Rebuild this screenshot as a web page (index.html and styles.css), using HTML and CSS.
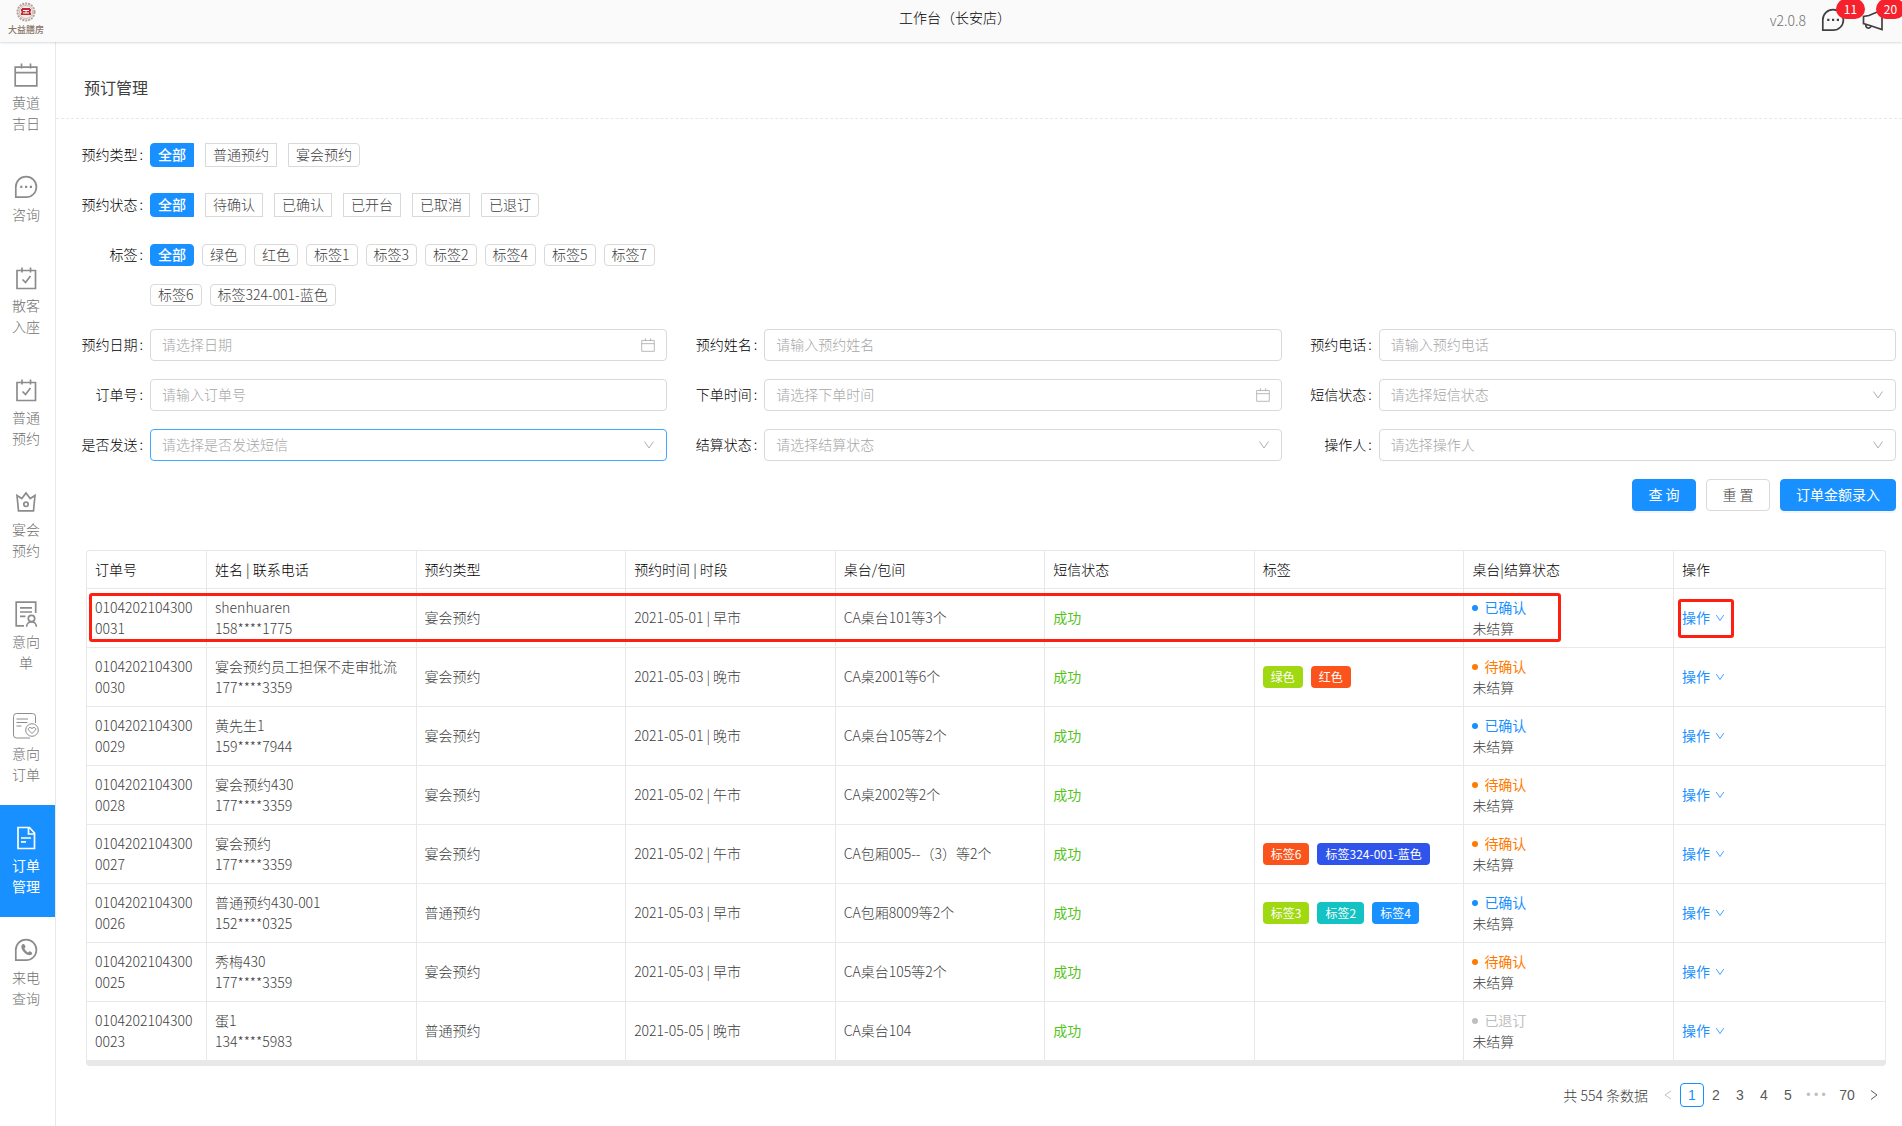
FILE: index.html
```html
<!DOCTYPE html>
<html lang="zh-CN">
<head>
    <meta charset="UTF-8">
    <meta name="viewport" content="width=device-width, initial-scale=1.0">
    <title>预订管理</title>
    <link rel="stylesheet" href="styles.css">
</head>
<body>
    <svg class="defs" width="0" height="0" aria-hidden="true">
        <symbol id="i-calendar" viewBox="0 0 24 24">
            <path d="M1.2 4.2h21.6v18.6H1.2zM1.2 9.7h21.6M7.5 .5v5M16.5 .5v5"/>
        </symbol>
        <symbol id="i-message" viewBox="0 0 24 24">
            <path d="M1.8 22.2V12A10.3 10.3 0 1 1 12 22.2z"/>
            <path class="fill" d="M6.2 10.8h2.2v2.2H6.2zM11 10.8h2.2v2.2H11zM15.8 10.8H18v2.2h-2.2z"/>
        </symbol>
        <symbol id="i-schedule" viewBox="0 0 24 24">
            <path d="M3 4.5h18.500v18H3zM8 1.500v5M16.500 1.500v5M8.500 13.500l3 3 5-6.500"/>
        </symbol>
        <symbol id="i-crown" viewBox="0 0 24 24">
            <path d="M3 5.500l4.800 3L12 3l4.200 5.500 4.800-3-1.500 15.300h-15z"/>
            <circle cx="12" cy="14.300" r="2.200"/>
        </symbol>
        <symbol id="i-solution" viewBox="0 0 24 26">
            <path d="M10 24.800H2.200V1.200h19.500V12M6 6.800h12M6 11h12M6 15.300h5.500"/>
            <circle cx="17.500" cy="17.500" r="3.200"/>
            <path d="M12.600 25.800c0-6.600 9.800-6.600 9.800 0"/>
        </symbol>
        <symbol id="i-intent" viewBox="0 0 26 26">
            <path d="M17 25H3.500a3 3 0 0 1-3-3V3.500a3 3 0 0 1 3-3h16a3 3 0 0 1 3 3V10M3.500 6h11.500M3.500 9.500h11M3.500 13h5"/>
            <circle cx="19" cy="17" r="6.300"/>
            <path d="M19 20.500l-3.300-3.300c-1.600-2 1.500-4 3.300-1.600 1.800-2.400 4.900-.4 3.300 1.600z"/>
        </symbol>
        <symbol id="i-file" viewBox="0 0 24 24">
            <path d="M4 1.500h11.500L20.500 7v15.500H4zM14.500 1.500V8h6M7 12h10M7 15.800h5"/>
        </symbol>
        <symbol id="i-phone" viewBox="0 0 24 24">
            <path d="M1.800 22.200V12A10.300 10.300 0 1 1 12 22.200z"/>
            <path class="fill" d="M8.500 6.200c-4 3.300 3.500 12.200 8.200 10.800 1.800-.8 2-2.200.6-3.100-1.700-1-2-.7-3.200.5-1.700-.8-3-2.200-3.700-3.900 1.200-1 1.300-1.700.5-3.300-.6-1-1.500-1.600-2.400-1z"/>
        </symbol>
        <symbol id="i-horn" viewBox="0 0 24 24">
            <path d="M21 2v19.500L9 17.500l-6.500-2V8.500L8 7.500zM5 16.500a2.600 2.600 0 1 0 5 1.200"/>
        </symbol>
        <symbol id="i-down" viewBox="0 0 12 12">
            <path d="M1.500 2.500L6 9l4.500-6.500"/>
        </symbol>
        <symbol id="i-left" viewBox="0 0 12 12">
            <path d="M9 2L3 6l6 4"/>
        </symbol>
        <symbol id="i-right" viewBox="0 0 12 12">
            <path d="M3 1.500L9 6l-6 4.500"/>
        </symbol>
    </svg>

    <header class="header">
        <a class="logo" href="#" aria-label="大益膳房">
            <svg width="20" height="20" viewBox="0 0 20 20">
                <circle cx="10" cy="10" r="8.500" fill="#f4efec" stroke="#b5a197" stroke-width="2" stroke-dasharray="2 1"/>
                <circle cx="10" cy="10" r="6.500" fill="none" stroke="#c9bab2" stroke-width="1"/>
                <path fill="#bf2a34" d="M6 6h8v1h1v2.500h-1v1h1V13H5v-2.500h1v-1H5V7h1z"/>
                <path stroke="#fff" fill="none" d="M7 8.500h6M7 11h6M10 8v3"/>
            </svg>
            <span>大益膳房</span>
        </a>
        <div class="header-title">工作台（长安店）</div>
        <div class="header-right">
            <span class="version">v2.0.8</span>
            <button class="notice" aria-label="消息">
                <svg class="icon"><use href="#i-message"/></svg>
                <span class="count">11</span>
            </button>
            <button class="notice" aria-label="公告">
                <svg class="icon"><use href="#i-horn"/></svg>
                <span class="count">20</span>
            </button>
        </div>
    </header>

    <div class="layout">
        <nav class="sidebar">
            <a href="#"><svg class="icon"><use href="#i-calendar"/></svg>黄道吉日</a>
            <a href="#"><svg class="icon"><use href="#i-message"/></svg>咨询</a>
            <a href="#"><svg class="icon"><use href="#i-schedule"/></svg>散客入座</a>
            <a href="#"><svg class="icon"><use href="#i-schedule"/></svg>普通预约</a>
            <a href="#"><svg class="icon"><use href="#i-crown"/></svg>宴会预约</a>
            <a href="#"><svg class="icon tall"><use href="#i-solution"/></svg>意向单</a>
            <a href="#"><svg class="icon tall thin"><use href="#i-intent"/></svg>意向订单</a>
            <a href="#" class="active"><svg class="icon"><use href="#i-file"/></svg>订单管理</a>
            <a href="#"><svg class="icon"><use href="#i-phone"/></svg>来电查询</a>
        </nav>

        <main class="main">
            <h1 class="page-title">预订管理</h1>

            <form class="filters">
                <div class="field">
                    <span class="label">预约类型</span>
                    <div class="radios">
                        <button type="button" class="on">全部</button>
                        <button type="button">普通预约</button>
                        <button type="button">宴会预约</button>
                    </div>
                </div>
                <div class="field">
                    <span class="label">预约状态</span>
                    <div class="radios">
                        <button type="button" class="on">全部</button>
                        <button type="button">待确认</button>
                        <button type="button">已确认</button>
                        <button type="button">已开台</button>
                        <button type="button">已取消</button>
                        <button type="button">已退订</button>
                    </div>
                </div>
                <div class="field">
                    <span class="label">标签</span>
                    <div class="checks">
                        <button type="button" class="on">全部</button>
                        <button type="button">绿色</button>
                        <button type="button">红色</button>
                        <button type="button">标签1</button>
                        <button type="button">标签3</button>
                        <button type="button">标签2</button>
                        <button type="button">标签4</button>
                        <button type="button">标签5</button>
                        <button type="button">标签7</button>
                        <button type="button">标签6</button>
                        <button type="button">标签324-001-蓝色</button>
                    </div>
                </div>

                <div class="grid">
                    <div class="field">
                        <label class="label" for="date">预约日期</label>
                        <div class="control">
                            <input type="text" id="date" placeholder="请选择日期">
                            <svg class="suffix"><use href="#i-calendar"/></svg>
                        </div>
                    </div>
                    <div class="field">
                        <label class="label" for="name">预约姓名</label>
                        <div class="control"><input type="text" id="name" placeholder="请输入预约姓名"></div>
                    </div>
                    <div class="field">
                        <label class="label" for="phone">预约电话</label>
                        <div class="control"><input type="text" id="phone" placeholder="请输入预约电话"></div>
                    </div>
                    <div class="field">
                        <label class="label" for="order">订单号</label>
                        <div class="control"><input type="text" id="order" placeholder="请输入订单号"></div>
                    </div>
                    <div class="field">
                        <label class="label" for="time">下单时间</label>
                        <div class="control">
                            <input type="text" id="time" placeholder="请选择下单时间">
                            <svg class="suffix"><use href="#i-calendar"/></svg>
                        </div>
                    </div>
                    <div class="field">
                        <label class="label" for="sms">短信状态</label>
                        <div class="control">
                            <select id="sms"><option>请选择短信状态</option></select>
                            <svg class="suffix arrow"><use href="#i-down"/></svg>
                        </div>
                    </div>
                    <div class="field">
                        <label class="label" for="send">是否发送</label>
                        <div class="control">
                            <select id="send" class="hover"><option>请选择是否发送短信</option></select>
                            <svg class="suffix arrow"><use href="#i-down"/></svg>
                        </div>
                    </div>
                    <div class="field">
                        <label class="label" for="settle">结算状态</label>
                        <div class="control">
                            <select id="settle"><option>请选择结算状态</option></select>
                            <svg class="suffix arrow"><use href="#i-down"/></svg>
                        </div>
                    </div>
                    <div class="field">
                        <label class="label" for="operator">操作人</label>
                        <div class="control">
                            <select id="operator"><option>请选择操作人</option></select>
                            <svg class="suffix arrow"><use href="#i-down"/></svg>
                        </div>
                    </div>
                </div>

                <div class="actions">
                    <button type="button" class="btn primary">查 询</button>
                    <button type="button" class="btn">重 置</button>
                    <button type="button" class="btn primary">订单金额录入</button>
                </div>
            </form>

            <div class="table-wrap">
                <table>
                    <thead>
                        <tr>
                            <th class="col-no">订单号</th>
                            <th>姓名 | 联系电话</th>
                            <th>预约类型</th>
                            <th>预约时间 | 时段</th>
                            <th>桌台/包间</th>
                            <th>短信状态</th>
                            <th>标签</th>
                            <th>桌台|结算状态</th>
                            <th class="col-op">操作</th>
                        </tr>
                    </thead>
                    <tbody>
                        <tr>
                            <td>01042021043000031</td>
                            <td>shenhuaren<br>158****1775</td>
                            <td>宴会预约</td>
                            <td>2021-05-01 | 早市</td>
                            <td>CA桌台101等3个</td>
                            <td class="success">成功</td>
                            <td></td>
                            <td><span class="status blue">已确认</span>未结算</td>
                            <td><a href="#" class="op marked">操作<svg><use href="#i-down"/></svg></a></td>
                        </tr>
                        <tr>
                            <td>01042021043000030</td>
                            <td>宴会预约员工担保不走审批流<br>177****3359</td>
                            <td>宴会预约</td>
                            <td>2021-05-03 | 晚市</td>
                            <td>CA桌2001等6个</td>
                            <td class="success">成功</td>
                            <td><div class="tags"><span class="tag lime">绿色</span><span class="tag red">红色</span></div></td>
                            <td><span class="status orange">待确认</span>未结算</td>
                            <td><a href="#" class="op">操作<svg><use href="#i-down"/></svg></a></td>
                        </tr>
                        <tr>
                            <td>01042021043000029</td>
                            <td>黄先生1<br>159****7944</td>
                            <td>宴会预约</td>
                            <td>2021-05-01 | 晚市</td>
                            <td>CA桌台105等2个</td>
                            <td class="success">成功</td>
                            <td></td>
                            <td><span class="status blue">已确认</span>未结算</td>
                            <td><a href="#" class="op">操作<svg><use href="#i-down"/></svg></a></td>
                        </tr>
                        <tr>
                            <td>01042021043000028</td>
                            <td>宴会预约430<br>177****3359</td>
                            <td>宴会预约</td>
                            <td>2021-05-02 | 午市</td>
                            <td>CA桌2002等2个</td>
                            <td class="success">成功</td>
                            <td></td>
                            <td><span class="status orange">待确认</span>未结算</td>
                            <td><a href="#" class="op">操作<svg><use href="#i-down"/></svg></a></td>
                        </tr>
                        <tr>
                            <td>01042021043000027</td>
                            <td>宴会预约<br>177****3359</td>
                            <td>宴会预约</td>
                            <td>2021-05-02 | 午市</td>
                            <td>CA包厢005--（3）等2个</td>
                            <td class="success">成功</td>
                            <td><div class="tags"><span class="tag red">标签6</span><span class="tag navy">标签324-001-蓝色</span></div></td>
                            <td><span class="status orange">待确认</span>未结算</td>
                            <td><a href="#" class="op">操作<svg><use href="#i-down"/></svg></a></td>
                        </tr>
                        <tr>
                            <td>01042021043000026</td>
                            <td>普通预约430-001<br>152****0325</td>
                            <td>普通预约</td>
                            <td>2021-05-03 | 早市</td>
                            <td>CA包厢8009等2个</td>
                            <td class="success">成功</td>
                            <td><div class="tags"><span class="tag lime">标签3</span><span class="tag cyan">标签2</span><span class="tag sky">标签4</span></div></td>
                            <td><span class="status blue">已确认</span>未结算</td>
                            <td><a href="#" class="op">操作<svg><use href="#i-down"/></svg></a></td>
                        </tr>
                        <tr>
                            <td>01042021043000025</td>
                            <td>秀梅430<br>177****3359</td>
                            <td>宴会预约</td>
                            <td>2021-05-03 | 早市</td>
                            <td>CA桌台105等2个</td>
                            <td class="success">成功</td>
                            <td></td>
                            <td><span class="status orange">待确认</span>未结算</td>
                            <td><a href="#" class="op">操作<svg><use href="#i-down"/></svg></a></td>
                        </tr>
                        <tr>
                            <td>01042021043000023</td>
                            <td>蛋1<br>134****5983</td>
                            <td>普通预约</td>
                            <td>2021-05-05 | 晚市</td>
                            <td>CA桌台104</td>
                            <td class="success">成功</td>
                            <td></td>
                            <td><span class="status gray">已退订</span>未结算</td>
                            <td><a href="#" class="op">操作<svg><use href="#i-down"/></svg></a></td>
                        </tr>
                    </tbody>
                </table>
                <div class="row-mark"></div>
            </div>

            <div class="pagination">
                <span class="total">共 554 条数据</span>
                <button class="disabled" aria-label="上一页"><svg><use href="#i-left"/></svg></button>
                <button class="current">1</button>
                <button>2</button>
                <button>3</button>
                <button>4</button>
                <button>5</button>
                <span class="more">• • •</span>
                <button class="last">70</button>
                <button aria-label="下一页"><svg><use href="#i-right"/></svg></button>
            </div>
        </main>
    </div>
</body>
</html>
```
FILE: styles.css
```css
* {
    box-sizing: border-box;
}
body {
    margin: 0;
    min-height: 100vh;
    display: flex;
    flex-direction: column;
    font-family: "Noto Sans CJK SC", sans-serif;
    font-size: 14px;
    font-weight: 300;
    line-height: 21px;
    color: #404040;
    background: #fff;
}
button,
input,
select {
    font: inherit;
    color: inherit;
    margin: 0;
}
button {
    cursor: pointer;
}
a {
    color: inherit;
    text-decoration: none;
}
svg {
    fill: none;
    stroke: currentColor;
}
.fill {
    fill: currentColor;
    stroke: none;
}
.defs {
    position: absolute;
}
.icon {
    display: block;
    width: 24px;
    height: 24px;
    stroke-width: 1.7;
}

/* header */
.header {
    position: relative;
    z-index: 1;
    display: grid;
    grid-template-columns: 1fr auto 1fr;
    height: 42px;
    background: #fafafa;
    box-shadow: 0 1px 2px rgba(0, 0, 0, 0.15);
    clip-path: inset(0 0 -4px 0);
    overflow: hidden;
    flex: none;
}
.logo {
    width: 52px;
    padding-top: 2px;
    display: flex;
    flex-direction: column;
    align-items: center;
    color: #8a7468;
    font-size: 9px;
    font-weight: 500;
    line-height: 16px;
}
.logo svg {
    stroke: none;
}
.header-title {
    padding-left: 8px;
    line-height: 34px;
    color: #000;
}
.header-right {
    display: flex;
    justify-content: flex-end;
    align-items: flex-start;
    padding: 8px 17px 0 0;
}
.version {
    margin-right: 15px;
    line-height: 24px;
    color: #707070;
}
.notice {
    position: relative;
    border: 0;
    padding: 0;
    background: none;
}
.notice + .notice {
    margin-left: 16px;
}
.count {
    position: absolute;
    left: 15px;
    top: -9px;
    width: 29px;
    height: 20px;
    border-radius: 10px;
    background: #f5222d;
    color: #fff;
    font-size: 12px;
    font-weight: 400;
    line-height: 20px;
    text-align: center;
}

/* sidebar */
.layout {
    flex: 1;
    display: flex;
}
.sidebar {
    width: 56px;
    border-right: 1px solid #e8e8e8;
    flex: none;
}
.sidebar a {
    display: flex;
    flex-direction: column;
    align-items: center;
    gap: 5px;
    padding: 21px 15px 20px 12px;
    color: #707070;
    text-align: center;
    word-break: break-all;
}
.sidebar .icon {
    color: #8c8c8c;
}
.sidebar .tall {
    width: 26px;
    height: 26px;
    margin: -1px;
}
.sidebar .thin {
    stroke-width: 1;
}
.sidebar .active,
.sidebar .active .icon {
    background: #1890ff;
    color: #fff;
    font-weight: 400;
}

/* filters */
.main {
    flex: 1;
    min-width: 0;
}
.page-title {
    margin: 0;
    padding: 33px 28px 19px;
    border-bottom: 1px dashed #e8e8e8;
    font-size: 16px;
    font-weight: 400;
    line-height: 24px;
}
.filters {
    padding: 16px 6px 0 25px;
    display: flex;
    flex-direction: column;
    gap: 10px;
}
.grid {
    display: grid;
    grid-template-columns: repeat(3, 1fr);
    gap: 10px 28px;
}
.field {
    display: flex;
    min-height: 40px;
}
.filters > .field {
    width: calc((100% - 56px) / 3);
}
.label {
    width: 69px;
    line-height: 38px;
    text-align: right;
    white-space: nowrap;
    color: #000;
    flex: none;
}
.label::after {
    content: ":";
    margin: 0 7px 0 2px;
}
.control {
    position: relative;
    flex: 1;
    padding: 4px 0;
}
.control input,
.control select {
    display: block;
    width: 100%;
    height: 32px;
    padding: 0 11px 2px;
    border: 1px solid #d9d9d9;
    border-radius: 4px;
    background: #fff;
    appearance: none;
    outline: none;
}
.control select,
.control input::placeholder {
    color: #a6a6a6;
}
.control .hover {
    border-color: #40a9ff;
}
.suffix {
    position: absolute;
    right: 12px;
    top: 13px;
    width: 14px;
    height: 14px;
    color: #b0b0b0;
    stroke-width: 1.5;
    pointer-events: none;
}
.arrow {
    width: 12px;
    height: 12px;
    top: 14px;
    stroke-width: 1;
}
.radios,
.checks {
    display: flex;
    align-items: center;
}
.radios {
    gap: 11px;
    white-space: nowrap;
}
.radios button,
.checks button {
    padding: 0 7px 2px;
    border: 1px solid #d9d9d9;
    background: #fff;
}
.radios button {
    height: 24px;
    line-height: 20px;
}
.radios button:first-child {
    border-radius: 4px 0 0 4px;
}
.radios button:last-child {
    border-radius: 0 4px 4px 0;
}
.checks {
    flex: 1;
    flex-wrap: wrap;
    gap: 18px 8px;
    padding: 9px 0;
}
.checks button {
    height: 22px;
    line-height: 18px;
    border-radius: 4px;
}
.filters .on {
    border-color: #1890ff;
    background: #1890ff;
    color: #fff;
    font-weight: 500;
}
.actions {
    display: flex;
    justify-content: flex-end;
    gap: 10px;
    padding: 4px 0;
}
.btn {
    min-width: 64px;
    height: 32px;
    padding: 0 15px 2px;
    border: 1px solid #d9d9d9;
    border-radius: 4px;
    background: #fff;
}
.btn.primary {
    border-color: #1890ff;
    background: #1890ff;
    color: #fff;
    font-weight: 400;
    box-shadow: 0 2px 0 rgba(0, 0, 0, 0.04);
}

/* table */
.table-wrap {
    position: relative;
    margin: 35px 16px 0 30px;
    border: 1px solid #e8e8e8;
    border-right: 0;
    border-bottom-width: 6px;
    border-radius: 4px;
}
table {
    width: 100%;
    table-layout: fixed;
    border-collapse: separate;
    border-spacing: 0;
}
th,
td {
    height: 59px;
    padding: 7px 8px 9px;
    border-right: 1px solid #e8e8e8;
    border-bottom: 1px solid #e8e8e8;
    text-align: left;
    font-weight: 300;
    word-break: break-all;
}
th {
    height: 38px;
    padding: 8px;
    color: #000;
}
.col-no {
    width: 120px;
}
.col-op {
    width: 212px;
}
td:first-child,
td:nth-child(2),
td:nth-child(7),
td:nth-child(8) {
    padding: 8px;
}
tbody tr:last-child td {
    height: 58px;
    border-bottom: 0;
}
.success {
    color: #52c41a;
    font-weight: 400;
}
.status {
    display: flex;
    align-items: center;
    gap: 6px;
    font-weight: 400;
}
.status::before {
    content: "";
    width: 6px;
    height: 6px;
    border-radius: 50%;
    background: currentColor;
}
.blue {
    color: #1890ff;
}
.orange {
    color: #ff7a00;
}
.gray {
    color: #bfbfbf;
}
.tags {
    display: flex;
    gap: 8px;
}
.tag {
    height: 22px;
    padding: 0 8px;
    border-radius: 4px;
    color: #fff;
    font-size: 12px;
    font-weight: 400;
    line-height: 22px;
}
.lime {
    background: #a0d911;
}
.red {
    background: #fa541c;
}
.navy {
    background: #2f54eb;
}
.cyan {
    background: #13c2c2;
}
.sky {
    background: #1890ff;
}
.op {
    position: relative;
    display: inline-flex;
    align-items: center;
    gap: 5px;
    color: #1890ff;
    font-weight: 400;
}
.op svg {
    width: 10px;
    height: 10px;
    margin-top: 2px;
}
.marked::after {
    content: "";
    position: absolute;
    inset: -8px -9px -10px -4px;
    border: 3px solid #ff1f10;
    border-radius: 3px;
}
.row-mark {
    position: absolute;
    top: 42px;
    left: 2px;
    right: 325px;
    height: 49px;
    border: 3px solid #ff1f10;
    border-radius: 3px;
    pointer-events: none;
}

/* pagination */
.pagination {
    display: flex;
    justify-content: flex-end;
    align-items: center;
    padding: 17px 16px 20px;
    font-family: "Liberation Sans", "Noto Sans CJK SC", sans-serif;
}
.pagination button {
    min-width: 24px;
    height: 24px;
    padding: 0;
    border: 1px solid transparent;
    border-radius: 4px;
    background: none;
    color: #595959;
    line-height: 22px;
}
.pagination svg {
    display: block;
    width: 12px;
    height: 12px;
    margin: 0 auto;
}
.pagination .total {
    margin-right: 8px;
    font-family: "Noto Sans CJK SC", sans-serif;
}
.pagination .disabled {
    color: #bfbfbf;
}
.pagination .current {
    border-color: #1890ff;
    color: #1890ff;
}
.pagination .more {
    width: 32px;
    color: #bfbfbf;
    font-size: 12px;
    text-align: center;
}
.pagination .last {
    width: 30px;
}
```
